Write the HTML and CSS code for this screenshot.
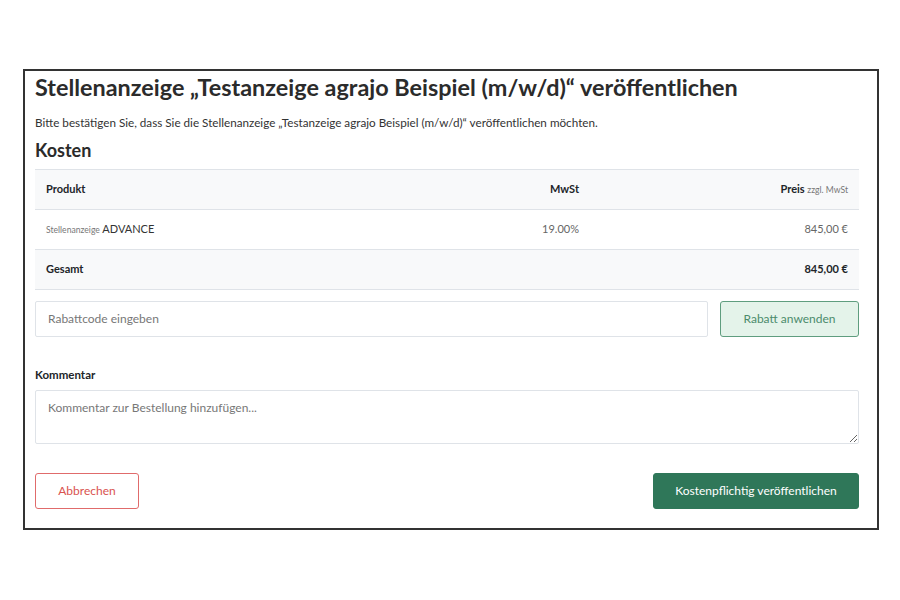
FILE: index.html
```html
<!DOCTYPE html>
<html lang="de">
<head>
<meta charset="utf-8">
<title>Stellenanzeige veröffentlichen</title>
<link rel="stylesheet" href="styles.css">
</head>
<body>
<div class="frame">
  <h1 class="title">Stellenanzeige „Testanzeige agrajo Beispiel (m/w/d)“ veröffentlichen</h1>
  <p class="lead">Bitte bestätigen Sie, dass Sie die Stellenanzeige „Testanzeige agrajo Beispiel (m/w/d)“ veröffentlichen möchten.</p>
  <h2 class="section">Kosten</h2>
  <div class="table">
    <div class="row head">
      <div class="cell">Produkt</div>
      <div class="cell num">MwSt</div>
      <div class="cell num">Preis <span class="hint">zzgl. MwSt</span></div>
    </div>
    <div class="row">
      <div class="cell"><span class="hint">Stellenanzeige</span> <span class="prod">ADVANCE</span></div>
      <div class="cell num muted">19.00%</div>
      <div class="cell num muted">845,00 €</div>
    </div>
    <div class="row total">
      <div class="cell">Gesamt</div>
      <div class="cell num"></div>
      <div class="cell num">845,00 €</div>
    </div>
  </div>
  <div class="coupon">
    <input class="input" type="text" placeholder="Rabattcode eingeben">
    <button class="btn btn-soft" type="button">Rabatt anwenden</button>
  </div>
  <label class="label">Kommentar</label>
  <textarea class="textarea" placeholder="Kommentar zur Bestellung hinzufügen..."></textarea>
  <div class="actions">
    <button class="btn btn-cancel" type="button">Abbrechen</button>
    <button class="btn btn-primary" type="button">Kostenpflichtig veröffentlichen</button>
  </div>
</div>
</body>
</html>
```
FILE: styles.css
```css
* { box-sizing: border-box; }
html, body { margin: 0; padding: 0; background: #fff; }
body { font-family: Lato, "Open Sans", sans-serif; color: #212529; }

.frame {
  margin: 69px 0 0 23px;
  width: 856px;
  height: 461px;
  border: 2px solid #333;
  padding: 0 18px 0 10px;
  display: flex;
  flex-direction: column;
}

.title {
  margin: 0;
  font-size: 23.4px;
  font-weight: 700;
  line-height: 32px;
  color: #2b2b2b;
}

.lead {
  margin: 11px 0 0;
  font-size: 11.7px;
  line-height: 16px;
  color: #333;
}

.section {
  margin: 9px 0 0;
  font-size: 18px;
  font-weight: 700;
  line-height: 22px;
  color: #2b2b2b;
}

.table {
  margin-top: 8px;
  border-top: 1px solid #dfe3e8;
}
.row {
  display: grid;
  grid-template-columns: 1fr 170px 269px;
  height: 40px;
  padding-bottom: 2px;
  border-bottom: 1px solid #dfe3e8;
  align-items: center;
  font-size: 11px;
}
.cell { padding: 0 11px; }
.num { text-align: right; }
.head, .total { background: #f8f9fa; font-weight: 700; color: #212529; }
.hint { font-size: 8.6px; font-weight: 400; color: #777; }
.prod { font-size: 11px; color: #333; }
.muted { color: #666; }

.coupon {
  margin-top: 11px;
  display: flex;
  gap: 12px;
}
.input {
  flex: 1;
  height: 36px;
  border: 1px solid #dfe3e8;
  border-radius: 2px;
  padding: 0 12px 2px;
  font-family: inherit;
  font-size: 12px;
  color: #333;
  outline: none;
}
.input::placeholder, .textarea::placeholder { color: #777; }

.btn {
  height: 36px;
  border-radius: 3px;
  font-family: inherit;
  font-size: 12px;
  padding-bottom: 2px;
  cursor: pointer;
}
.btn-soft {
  width: 139px;
  background: #e4f3ea;
  border: 1px solid #5f9d7f;
  color: #4b8b6c;
}

.label {
  margin-top: 30px;
  font-size: 11.5px;
  font-weight: 700;
  line-height: 16px;
  color: #212529;
}

.textarea {
  margin-top: 7px;
  height: 54px;
  width: 100%;
  border: 1px solid #dfe3e8;
  border-radius: 2px;
  padding: 9px 12px;
  font-family: inherit;
  font-size: 12px;
  resize: vertical;
  outline: none;
}

.actions {
  margin-top: 29px;
  display: flex;
  justify-content: space-between;
}
.btn-cancel {
  width: 104px;
  background: #fff;
  border: 1px solid #e06b6b;
  color: #d9534f;
}
.btn-primary {
  width: 206px;
  background: #2f7759;
  border: 1px solid #2f7759;
  color: #fff;
}
```
